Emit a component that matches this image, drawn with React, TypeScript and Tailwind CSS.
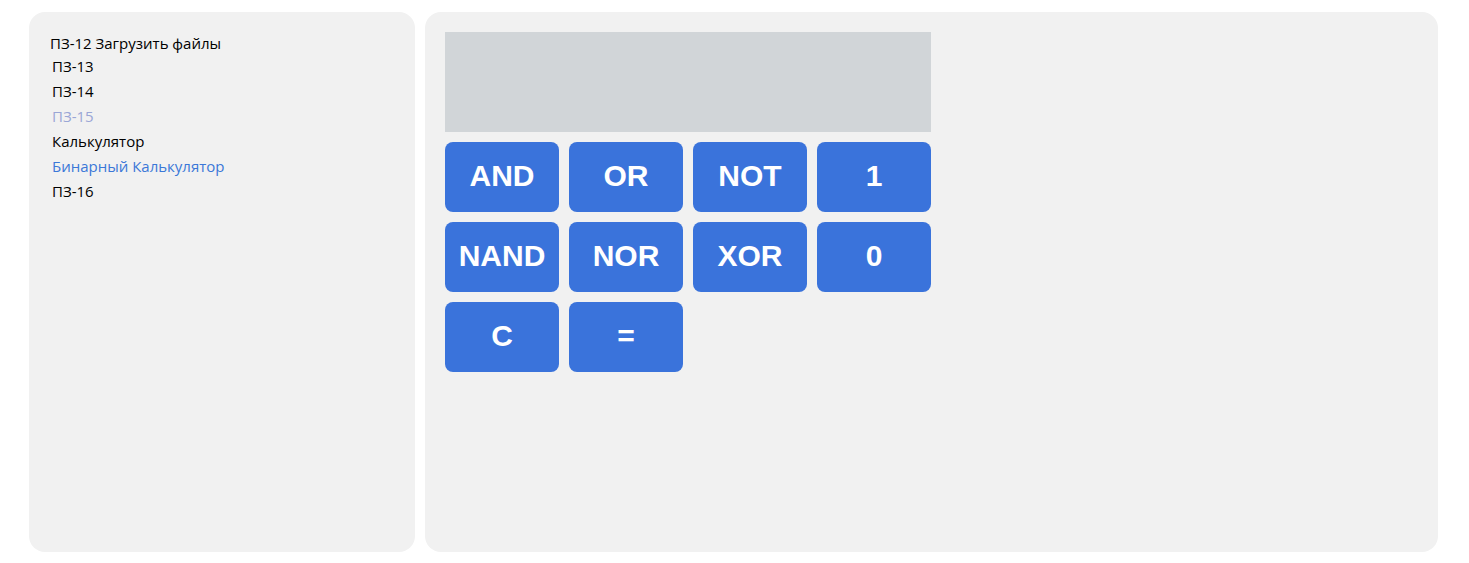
import React from 'react';

const links = [
  { label: 'ПЗ-13', cls: 'text-black' },
  { label: 'ПЗ-14', cls: 'text-black' },
  { label: 'ПЗ-15', cls: 'text-[#9aa6d6]' },
  { label: 'Калькулятор', cls: 'text-black' },
  { label: 'Бинарный Калькулятор', cls: 'text-[#3b78d8]' },
  { label: 'ПЗ-16', cls: 'text-black' },
];

const buttons = ['AND', 'OR', 'NOT', '1', 'NAND', 'NOR', 'XOR', '0', 'C', '='];

export default function App() {
  return (
    <div className="flex gap-[10px] bg-white pl-[29px] pr-[31px] pt-[12px] pb-[11px] h-[563px]">
      {/* Sidebar */}
      <div className="w-[386px] shrink-0 rounded-[16px] bg-[#f1f1f1] pl-[21px] pt-[21px] font-['Open_Sans',sans-serif] text-[15px]">
        <div className="leading-[20px] text-black">ПЗ-12 Загрузить файлы</div>
        <div className="pl-[2px] mt-[1px]">
          {links.map((l) => (
            <div key={l.label} className={`leading-[25px] ${l.cls}`}>{l.label}</div>
          ))}
        </div>
      </div>

      {/* Calculator */}
      <div className="flex-1 rounded-[16px] bg-[#f1f1f1] p-[20px]">
        <div className="w-[486px]">
          <div className="h-[100px] bg-[#d1d5d8]"></div>
          <div className="grid grid-cols-4 gap-[10px] mt-[10px]">
            {buttons.map((b) => (
              <button
                key={b}
                className="h-[70px] rounded-[8px] bg-[#3a73db] pb-[3px] text-white font-bold text-[30px] font-['Liberation_Sans',Arial,sans-serif]"
              >
                {b}
              </button>
            ))}
          </div>
        </div>
      </div>
    </div>
  );
}
